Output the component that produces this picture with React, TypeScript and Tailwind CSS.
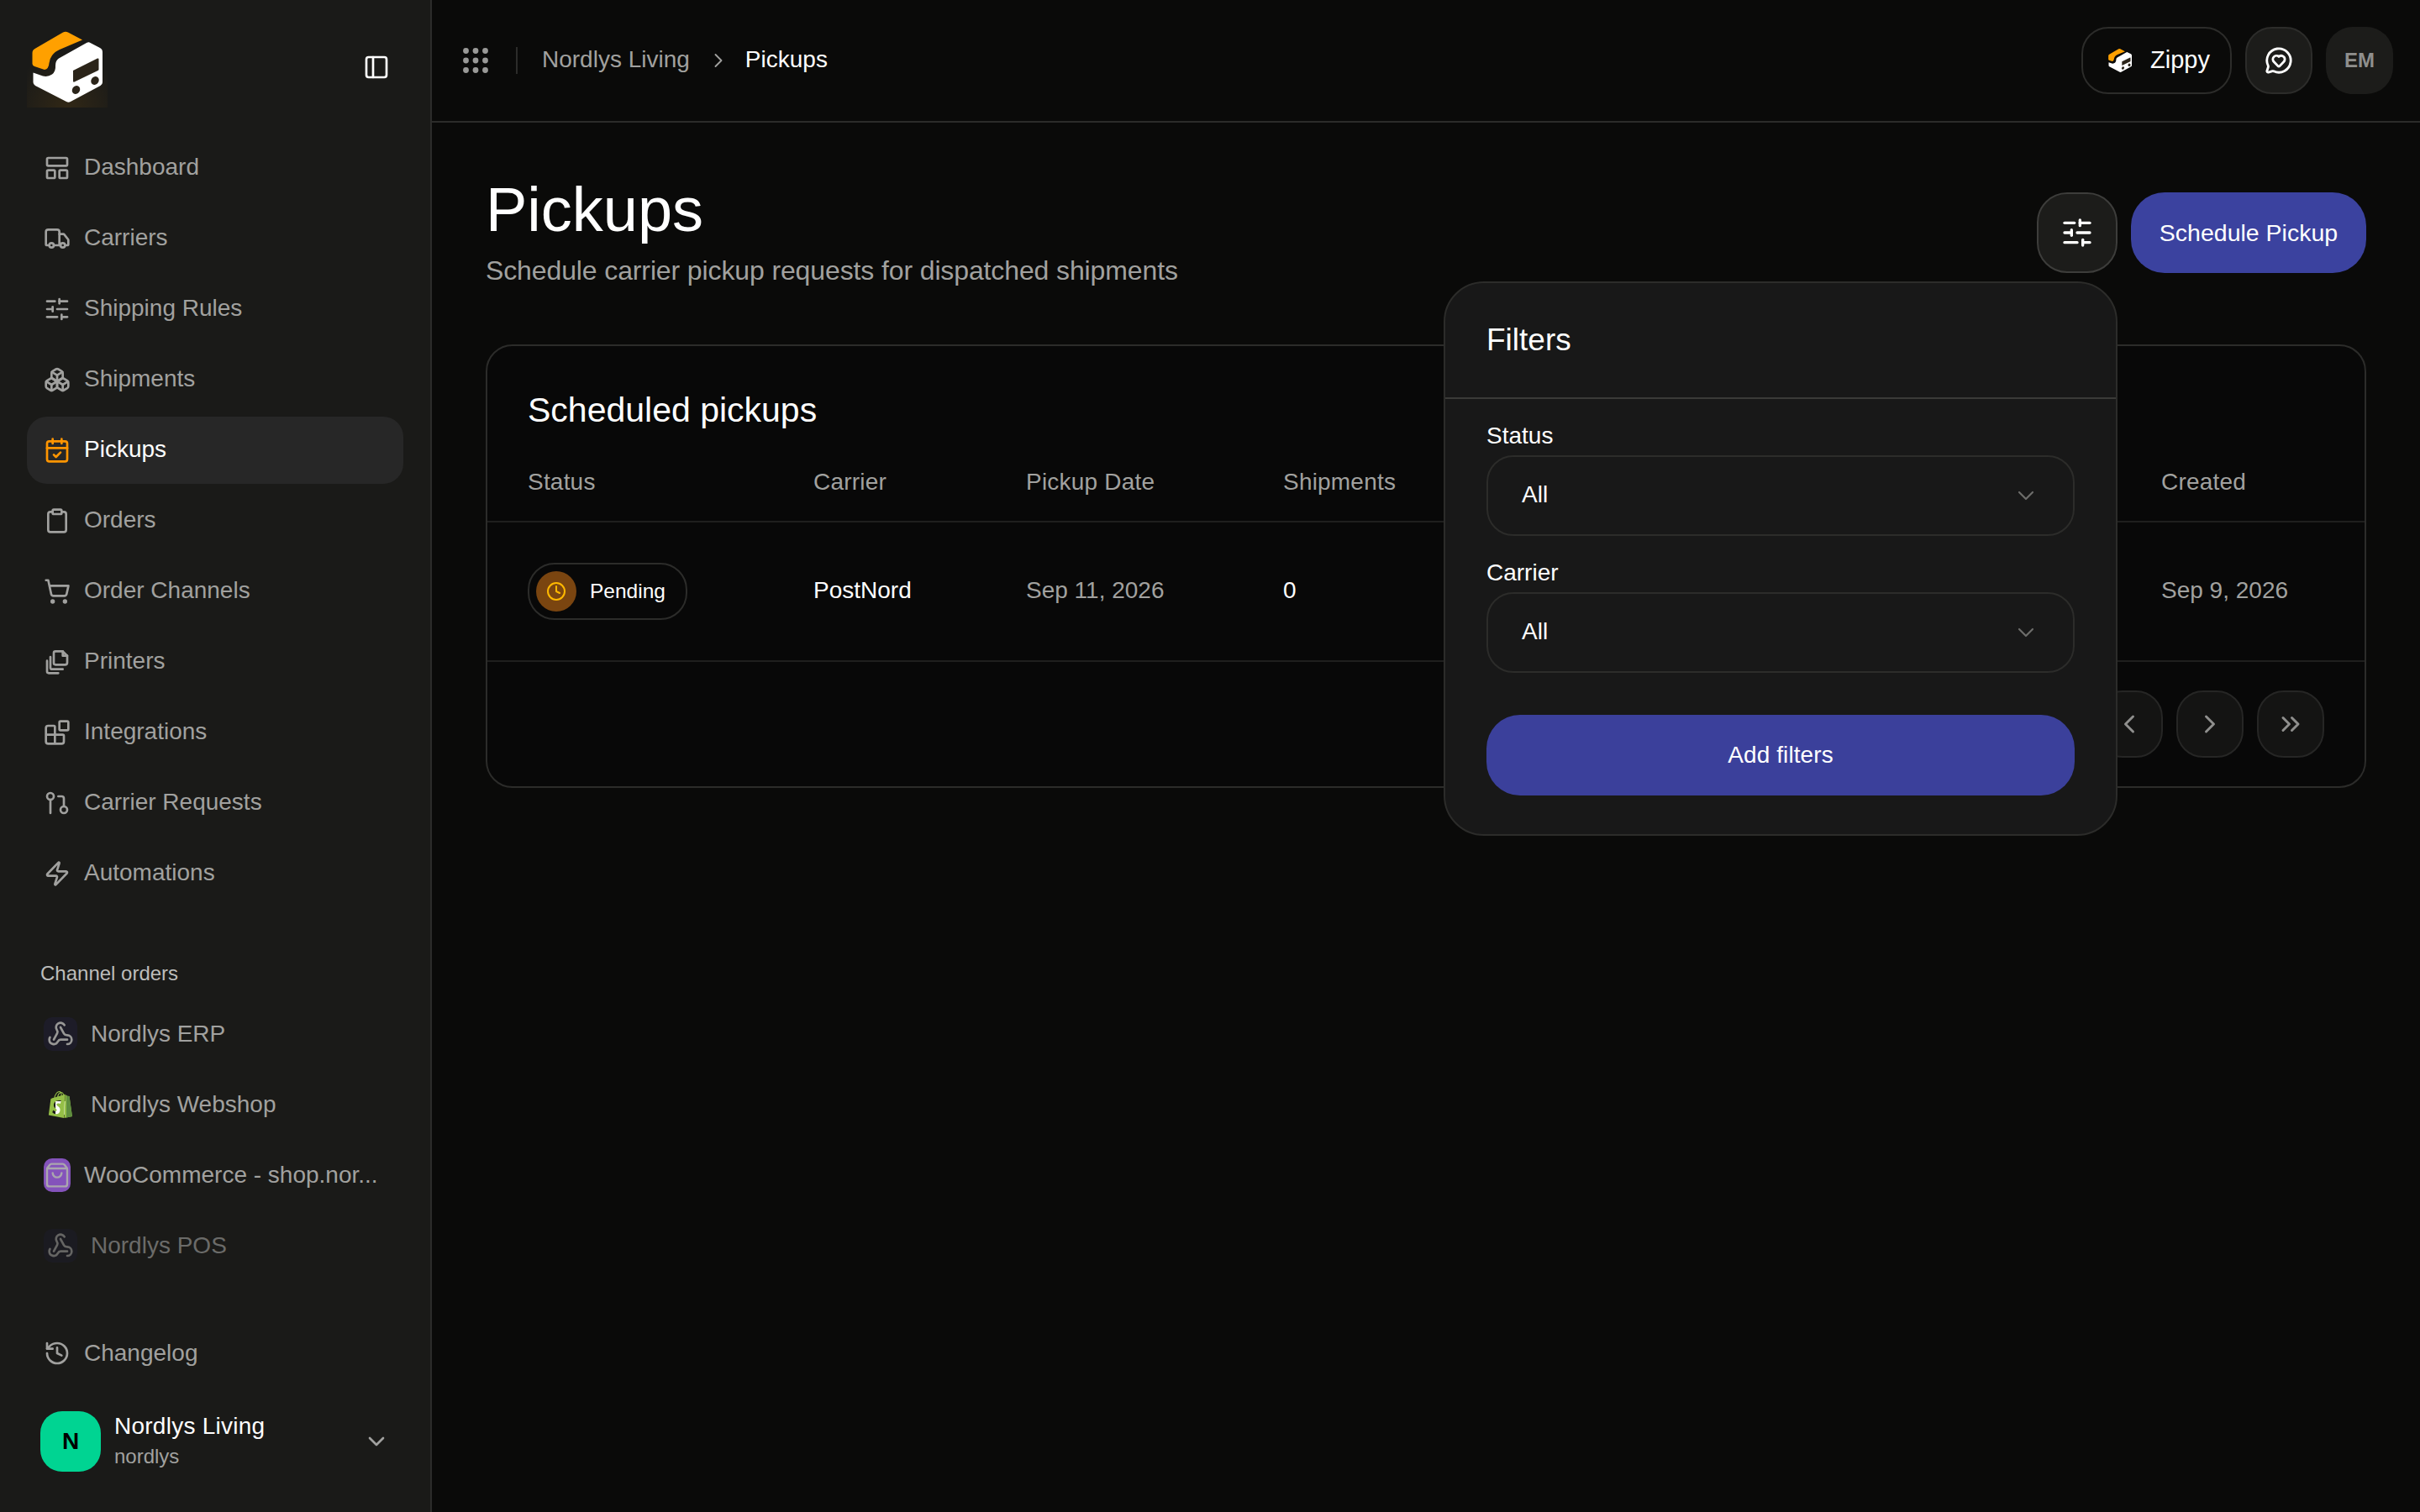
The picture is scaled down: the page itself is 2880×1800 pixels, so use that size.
import React from "react";
import {
  Blocks,
  Boxes,
  CalendarCheck,
  ChevronDown,
  ChevronLeft,
  ChevronRight,
  ChevronsLeft,
  ChevronsRight,
  Clipboard,
  Clock,
  GitPullRequest,
  History,
  LayoutPanelTop,
  MessageCircleHeart,
  PanelLeft,
  ShoppingBag,
  ShoppingCart,
  SlidersHorizontal,
  Truck,
  Webhook,
  Zap,
} from "lucide-react";
import { SiShopify } from "react-icons/si";

const fontStack = "font-['Liberation_Sans',Arial,sans-serif]";

function PrintersIcon({ className }: { className?: string }) {
  return (
    <svg viewBox="0 0 24 24" fill="none" stroke="currentColor" strokeWidth="2" strokeLinecap="round" strokeLinejoin="round" className={className}>
      <path d="M9 6.5V13a1.5 1.5 0 0 0 1.5 1.5H19a2 2 0 0 0 2-2V6.5L17 2.5h-6.5A1.5 1.5 0 0 0 9 4z" />
      <path d="M17 2.5v4h4" />
      <path d="M6 7.5v9.5a1.5 1.5 0 0 0 1.5 1.5H17" />
      <path d="M3 11v9.5A1.5 1.5 0 0 0 4.5 22H13" />
    </svg>
  );
}

function Logo({ size, glow }: { size: number; glow?: boolean }) {
  return (
    <svg viewBox="0 0 96 96" width={size} height={size} className="shrink-0">
      {glow && (
        <>
          <defs>
            <radialGradient id="logoGlow" cx="50%" cy="100%" r="70%">
              <stop offset="0%" stopColor="#ffa000" stopOpacity="0.1" />
              <stop offset="100%" stopColor="#ffa000" stopOpacity="0" />
            </radialGradient>
          </defs>
          <rect width="96" height="96" fill="url(#logoGlow)" />
        </>
      )}
      <path
        d="M6.5 31Q6.5 27.5 9.5 26L43 6.5Q46 5 49 6.5L66 15.5L39 27Q33 29.5 30 34Q27 38 26.5 43Q26 50 21 51L9 47Q6.5 46 6.5 44Z"
        fill="#ffa000"
      />
      <path
        d="M74.5 18.5L87 25Q90 26.5 90 30V66Q90 68.5 87.5 70L52 89Q49.5 90.5 47 89L10 70Q7.5 68.5 7.5 66V54.5L19 58.5Q25 60 30 56.5Q34.5 53 34 46Q34 40 38 37.5L71 19Q73 18 74.5 18.5Z"
        fill="#ffffff"
      />
      <path d="M55 52L84 37.5Q85.5 37 85.5 38.5V50.5Q85.5 51.5 84.5 52L56.5 65.5Q55 66 55 64.5Z" fill="#2b2419" />
      <ellipse cx="58.5" cy="75" rx="4.5" ry="5.2" transform="rotate(35 58.5 75)" fill="#2b2419" />
      <ellipse cx="81" cy="64" rx="4.5" ry="5.2" transform="rotate(35 81 64)" fill="#2b2419" />
    </svg>
  );
}

function GripDots() {
  const spots = [4, 15.5, 27];
  return (
    <svg viewBox="0 0 32 32" className="h-8 w-8 shrink-0 text-[#9a9a98]" fill="currentColor">
      {spots.map((y) => spots.map((x) => <circle key={`${x}-${y}`} cx={x + 0.5} cy={y + 0.5} r="3.4" />))}
    </svg>
  );
}

const NAV_ITEMS = [
  { label: "Dashboard", icon: LayoutPanelTop },
  { label: "Carriers", icon: Truck },
  { label: "Shipping Rules", icon: SlidersHorizontal },
  { label: "Shipments", icon: Boxes },
  { label: "Pickups", icon: CalendarCheck, active: true },
  { label: "Orders", icon: Clipboard },
  { label: "Order Channels", icon: ShoppingCart },
  { label: "Printers", icon: PrintersIcon },
  { label: "Integrations", icon: Blocks },
  { label: "Carrier Requests", icon: GitPullRequest },
  { label: "Automations", icon: Zap },
];

function WebhookBadge() {
  return (
    <span className="flex h-10 w-10 shrink-0 items-center justify-center rounded-[10px] bg-[#1d1c28]">
      <Webhook className="h-8 w-8 text-[#979795]" />
    </span>
  );
}

function ShopifyBadge() {
  return (
    <span className="relative flex h-10 w-10 shrink-0 items-center justify-center">
      <span className="absolute left-[14px] top-[16px] h-4 w-3 bg-white" />
      <SiShopify className="relative h-8 w-8 text-[#95bf47]" />
      <SiShopify className="absolute left-1 top-1 h-8 w-8 text-[#5e8e3e] [clip-path:polygon(72%_0,100%_0,100%_100%,72%_100%)]" />
    </span>
  );
}

function WooBadge() {
  return (
    <span className="flex h-10 w-8 shrink-0 items-center justify-center rounded-[10px] bg-[#8453bb]">
      <ShoppingBag className="h-8 w-8 text-[#aaa6ae]" strokeWidth={1.8} />
    </span>
  );
}

function Sidebar() {
  return (
    <aside className="flex h-full w-[514px] shrink-0 flex-col border-r-2 border-[#2c2c2a] bg-[#1a1a18]">
      <div className="mt-8 flex h-24 items-center justify-between pl-8 pr-[48px]">
        <Logo size={96} glow />
        <PanelLeft className="h-8 w-8 text-white" />
      </div>

      <nav className="mt-8 flex flex-col gap-1 px-8">
        {NAV_ITEMS.map(({ label, icon: Icon, active }) => (
          <a
            key={label}
            className={`flex h-20 items-center gap-4 rounded-[24px] pl-5 text-[28px] ${active ? "bg-[#272727] font-medium text-white" : "text-[#a1a19f]"}`}
          >
            <Icon className={`h-8 w-8 shrink-0 ${active ? "text-[#ff9500]" : "text-[#a1a19f]"}`} />
            <span className="pb-0.5">{label}</span>
          </a>
        ))}
      </nav>

      <div className="mt-[63px] pl-12 text-[24px] leading-8 font-medium text-[#bdbdbb]">Channel orders</div>

      <div className="mt-4 flex flex-col gap-1 px-8">
        <a className="flex h-20 items-center gap-4 pl-5 text-[28px] text-[#a1a19f]">
          <WebhookBadge />
          <span>Nordlys ERP</span>
        </a>
        <a className="flex h-20 items-center gap-4 pl-5 text-[28px] text-[#a1a19f]">
          <ShopifyBadge />
          <span>Nordlys Webshop</span>
        </a>
        <a className="flex h-20 items-center gap-4 pl-5 text-[28px] text-[#a1a19f]">
          <WooBadge />
          <span className="whitespace-nowrap">WooCommerce - shop.nor...</span>
        </a>
        <a className="flex h-20 items-center gap-4 pl-5 text-[28px] text-[#a1a19f] opacity-60">
          <WebhookBadge />
          <span>Nordlys POS</span>
        </a>
      </div>

      <div className="mt-auto px-8">
        <a className="flex h-20 items-center gap-4 pl-5 text-[28px] text-[#a1a19f]">
          <History className="h-8 w-8 shrink-0" />
          <span>Changelog</span>
        </a>
      </div>

      <div className="mb-12 mt-[29px] flex h-[72px] items-center pl-12 pr-[48px]">
        <span className="flex h-[72px] w-[72px] shrink-0 items-center justify-center rounded-[26px] bg-[#00d492] text-[28px] font-semibold text-black">
          N
        </span>
        <div className="ml-4 flex-1">
          <div className="text-[28px] leading-9 font-medium tracking-[0.25px] text-white">Nordlys Living</div>
          <div className="text-[24px] leading-9 text-[#a1a19f]">nordlys</div>
        </div>
        <ChevronDown className="h-8 w-8 text-[#a1a19f]" />
      </div>
    </aside>
  );
}

function TopBar() {
  return (
    <header className="flex h-[146px] shrink-0 items-center justify-between border-b-2 border-[#2c2c2a] pl-9 pr-8">
      <div className="flex items-center text-[28px]">
        <GripDots />
        <span className="ml-8 h-8 w-0.5 bg-[#2c2c2a]" />
        <span className="ml-[29px] pb-0.5 text-[#a1a19f]">Nordlys Living</span>
        <ChevronRight className="ml-[20px] h-7 w-7 text-[#a1a19f]" strokeWidth={1.6} />
        <span className="ml-[18px] pb-0.5 text-white">Pickups</span>
      </div>
      <div className="flex items-center gap-4">
        <button className="flex h-20 items-center gap-5 rounded-[32px] border-2 border-[#2c2c2a] pl-7 pr-6 text-[29px] text-white">
          <Logo size={32} />
          Zippy
        </button>
        <button className="flex h-20 w-20 items-center justify-center rounded-[32px] border-2 border-[#2c2c2a] bg-[#1c1c1a]">
          <MessageCircleHeart className="h-[34px] w-[34px] text-white" />
        </button>
        <span className="flex h-20 w-20 items-center justify-center rounded-[32px] bg-[#1c1c1a] text-[24px] font-semibold text-[#8f8f8d]">
          EM
        </span>
      </div>
    </header>
  );
}

function FilterSelect({ label }: { label: string }) {
  return (
    <div>
      <div className="text-[28px] leading-9 font-medium text-white">{label}</div>
      <div className="mt-[5px] flex h-[96px] items-center justify-between rounded-[32px] border-2 border-[#2c2c2a] pl-10 pr-[40px] text-[28px] text-white">
        <span className="pb-0.5">All</span>
        <ChevronDown className="h-8 w-8 text-[#6d6d6b]" strokeWidth={1.6} />
      </div>
    </div>
  );
}

function FiltersPopover() {
  return (
    <div className="absolute right-0 top-[calc(100%+10px)] z-10 w-[802px] rounded-[48px] border-2 border-[#2c2c2a] bg-[#181818]">
      <div className="flex h-[138px] items-center border-b-2 border-[#3a3a38] px-[49px] text-[37px] font-medium text-white">Filters</div>
      <div className="flex flex-col px-[49px] pb-[46px] pt-[26px]">
        <FilterSelect label="Status" />
        <div className="mt-[26px]">
          <FilterSelect label="Carrier" />
        </div>
        <button className="mt-[50px] h-[96px] rounded-[40px] bg-[#3b409b] text-[28px] font-medium tracking-[0.1px] text-white">Add filters</button>
      </div>
    </div>
  );
}

function PagerButton({ children }: { children: React.ReactNode }) {
  return (
    <button className="flex h-20 w-20 items-center justify-center rounded-[32px] border-2 border-[#262625] bg-[#141413] text-[#8f8f8d]">
      {children}
    </button>
  );
}

function PickupsCard() {
  return (
    <section className="mt-[64px] rounded-[32px] border-2 border-[#2c2c2a] bg-[#080808]">
      <h2 className="mt-12 px-12 text-[41px] leading-14 font-medium text-white">Scheduled pickups</h2>

      <div className="mt-3 grid h-[94px] grid-cols-[340px_253px_306px_1045px_1fr] items-center border-b-2 border-[#1f1f1e] px-12 text-[28px] tracking-[0.2px] text-[#a1a19f]">
        <span>Status</span>
        <span>Carrier</span>
        <span>Pickup Date</span>
        <span>Shipments</span>
        <span>Created</span>
      </div>

      <div className="grid h-[166px] grid-cols-[340px_253px_306px_1045px_1fr] items-center border-b-2 border-[#1f1f1e] px-12 text-[28px]">
        <span className="flex h-[68px] w-[190px] items-center rounded-[32px] border-2 border-[#2c2c2a] pl-2">
          <span className="flex h-12 w-12 items-center justify-center rounded-full bg-[#7a4510]">
            <Clock className="h-6 w-6 text-[#ffb900]" />
          </span>
          <span className="ml-4 text-[24.5px] font-medium text-white">Pending</span>
        </span>
        <span className="pb-0.5 text-white">PostNord</span>
        <span className="pb-0.5 text-[#a1a19f]">Sep 11, 2026</span>
        <span className="pb-0.5 text-white">0</span>
        <span className="pb-0.5 text-[#a1a19f]">Sep 9, 2026</span>
      </div>

      <div className="flex justify-end gap-4 px-12 py-[34px]">
        <PagerButton>
          <ChevronsLeft className="h-9 w-9" />
        </PagerButton>
        <PagerButton>
          <ChevronLeft className="h-9 w-9" />
        </PagerButton>
        <PagerButton>
          <ChevronRight className="h-9 w-9" />
        </PagerButton>
        <PagerButton>
          <ChevronsRight className="h-9 w-9" />
        </PagerButton>
      </div>
    </section>
  );
}

export default function App() {
  return (
    <div className={`flex h-screen w-full overflow-hidden bg-[#0a0a09] ${fontStack}`}>
      <Sidebar />
      <main className="flex min-w-0 flex-1 flex-col">
        <TopBar />
        <div className="px-16 pt-[62px]">
          <div className="flex h-[138px] items-center justify-between">
            <div>
              <h1 className="pt-0.5 text-[74px] leading-20 font-medium text-white">Pickups</h1>
              <p className="mt-2 text-[32px] leading-12 tracking-[-0.12px] text-[#a1a19f]">Schedule carrier pickup requests for dispatched shipments</p>
            </div>
            <div className="flex items-center gap-4">
              <div className="relative">
                <button className="flex h-24 w-24 items-center justify-center rounded-[36px] border-2 border-[#3d3d3b] bg-[#1c1c1a]">
                  <SlidersHorizontal className="h-10 w-10 text-white" />
                </button>
                <FiltersPopover />
              </div>
              <button className="h-24 w-[280px] rounded-[40px] bg-[#3b429f] text-[28.5px] font-medium text-white">Schedule Pickup</button>
            </div>
          </div>
          <PickupsCard />
        </div>
      </main>
    </div>
  );
}
